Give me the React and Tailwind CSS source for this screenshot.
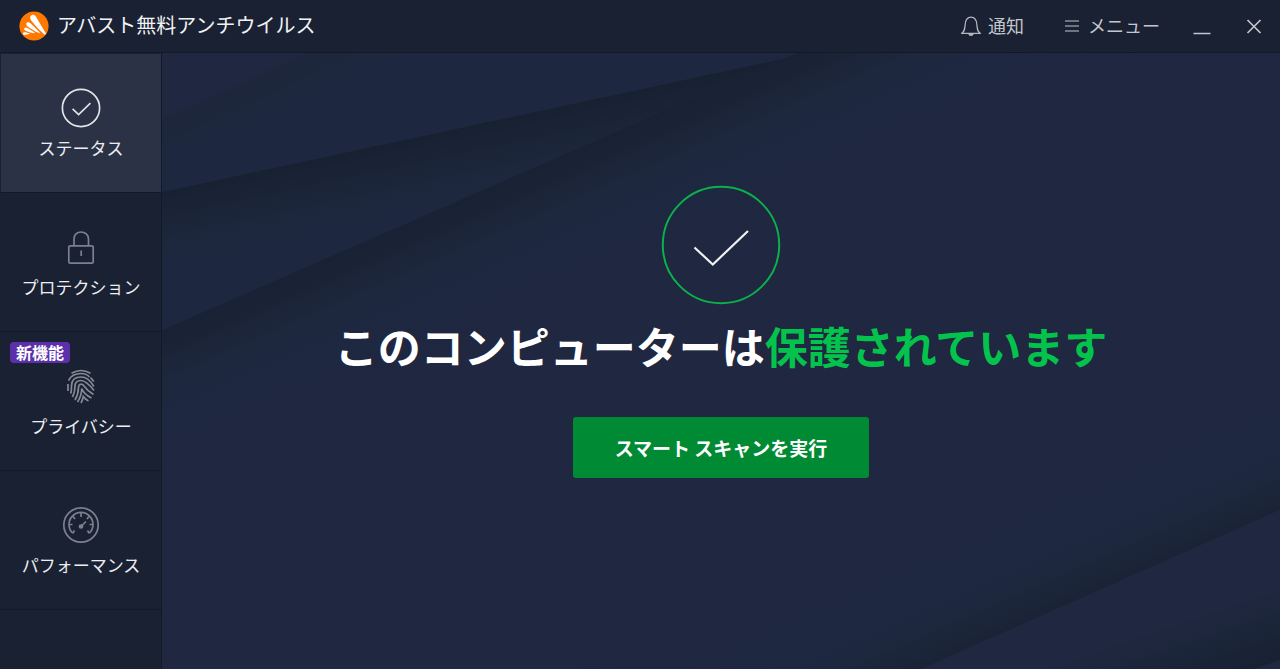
import React, { useState } from 'react';

function Logo() {
    return (
        <svg className="size-[30px]" viewBox="0 0 30 30" aria-hidden="true">
            <circle cx="15" cy="15" r="14.6" fill="#ff7800" />
            <g fill="#fff">
                <path d="M11.2 6.2C11.4 3.4 15 2.6 16.8 5.4L26.8 22.2C27.300 23.400 26.200 24 25.200 23.200C21 19.500 15.500 14 12.200 9.400C11.400 8.200 11.100 7.200 11.200 6.200Z" />
                <path d="M7.300 12.600C7.900 10.900 10 10.900 11.600 12.300L20.600 21.200C21.200 22 20.600 22.500 19.800 22.100C16 20.200 12 17.900 9 15.700C7.700 14.800 6.900 13.800 7.300 12.600Z" />
                <path d="M5.200 17.500C5.800 16.200 7.500 16.400 8.900 17.200L15.300 21.300C15.900 21.900 15.600 22.300 14.800 22.200C12 21.800 8.800 20.800 6.800 19.800C5.400 19.100 4.800 18.500 5.200 17.500Z" />
                <path d="M4 22.100C4.500 21.100 6 21.100 7.200 21.400L10.200 22.200C10.800 22.500 10.700 22.900 10.100 23.100C8.600 23.600 6.800 24 5.500 23.900C4.300 23.800 3.600 23 4 22.100Z" />
            </g>
        </svg>
    );
}

function StatusIcon() {
    return (
        <svg className="size-10" viewBox="0 0 40 40" fill="none" stroke="#e3e5e9" aria-hidden="true">
            <circle cx="20" cy="20" r="18.6" strokeWidth="1.7" />
            <path d="M11.6 20.8L17.6 26.6L29.4 15.2" strokeWidth="1.6" />
        </svg>
    );
}

function LockIcon() {
    return (
        <svg className="size-10" viewBox="0 0 40 40" fill="none" stroke="#7c818d" strokeWidth="1.7" aria-hidden="true">
            <rect x="7.8" y="18.8" width="24.4" height="17.4" rx="1.5" />
            <path d="M13 18.5V12C13 7.800 16 5 20 5S27.5 7.800 27.5 12V18.5M20.2 23.5V29" />
        </svg>
    );
}

function FingerprintIcon() {
    return (
        <svg className="size-10" viewBox="0 0 40 40" fill="none" stroke="#858a95" strokeWidth="1.7" aria-hidden="true">
            <path d="M10.5 7.200Q20 1.800 29.5 7.200" />
            <path d="M7.500 14.500Q11 7.500 20 7.500Q25.500 7.500 28.500 11" />
            <path d="M29.5 11.5L32.8 15.5" />
            <path d="M7 18V25" />
            <path d="M9.800 27.500Q10.500 24 10.500 20C10.500 14 14 11 20 11Q27.500 11 32.8 20.5" />
            <path d="M11.500 31Q14 26 14 20.500C14 16.500 16.500 14.500 20 14.500Q25 14.500 33 24.500" />
            <path d="M14 34Q17.500 28 17.500 21.500C17.500 17.300 21.500 17.300 23.500 20.500Q26.500 25 32.5 28.500" />
            <path d="M16.500 36Q20.500 30 20.800 22.500Q23 28.500 30.500 32" />
            <path d="M20 37Q21.700 34 22.300 30.500Q24.500 33.500 27.500 35" />
        </svg>
    );
}

function GaugeIcon() {
    return (
        <svg className="size-10" viewBox="0 0 40 40" fill="none" stroke="#7c818d" strokeWidth="1.7" aria-hidden="true">
            <circle cx="20" cy="20" r="17.2" />
            <path d="M11.8 28.2A12 12 0 1 1 28.2 28.2" />
            <path d="M20 8V12M12 11.500L14 14M28 11.500L26 14M8 19.500H11.500M32 19.500H28.500M11.800 28.200L13.500 25.500M28.200 28.200L26.500 25.500M20 21.500L25 16.500" />
            <circle cx="20" cy="21.5" r="1.5" fill="#7c818d" />
        </svg>
    );
}

function BellIcon() {
    return (
        <svg className="h-5 w-5" viewBox="0 0 20 20" fill="none" stroke="#b3b7bf" strokeWidth="1.2" aria-hidden="true">
            <path d="M.8 17.3C3.600 15.500 3.800 13 4.200 8.500C4.500 4 6.500 1.200 10 1.200S15.500 4 15.800 8.500C16.200 13 16.400 15.500 19.200 17.300Z" />
            <path d="M8 18H12L11.200 19.200H8.800Z" fill="#d9dbdf" />
        </svg>
    );
}

// Folded-paper shading behind the main panel
function Backdrop() {
    return (
        <svg
            className="absolute inset-0 h-full w-full"
            viewBox="0 0 1118 616"
            preserveAspectRatio="none"
            aria-hidden="true"
        >
            <defs>
                <linearGradient id="foldTop" gradientUnits="userSpaceOnUse" x1="0" y1="66" x2="17" y2="103">
                    <stop offset="0" stopColor="#1d263a" />
                    <stop offset="0.5" stopColor="#1d273c" />
                    <stop offset="1" stopColor="#1d2840" />
                </linearGradient>
                <linearGradient id="foldLong" gradientUnits="userSpaceOnUse" x1="0" y1="139" x2="19" y2="229">
                    <stop offset="0" stopColor="#182132" />
                    <stop offset="0.15" stopColor="#1a2335" />
                    <stop offset="0.45" stopColor="#1c263b" />
                    <stop offset="0.8" stopColor="#1d2840" />
                </linearGradient>
                <linearGradient id="foldMid" gradientUnits="userSpaceOnUse" x1="0" y1="277" x2="56" y2="405">
                    <stop offset="0" stopColor="#192234" />
                    <stop offset="0.15" stopColor="#1b2437" />
                    <stop offset="0.35" stopColor="#1d273d" />
                    <stop offset="0.5" stopColor="#1d2840" />
                    <stop offset="1" stopColor="#202740" />
                </linearGradient>
                <linearGradient id="foldLow" gradientUnits="userSpaceOnUse" x1="1118" y1="457" x2="1060" y2="326">
                    <stop offset="0" stopColor="#1a2336" />
                    <stop offset="0.15" stopColor="#1c263a" />
                    <stop offset="0.32" stopColor="#1d2840" />
                    <stop offset="1" stopColor="#202740" />
                </linearGradient>
                <linearGradient id="foldCorner" gradientUnits="userSpaceOnUse" x1="1118" y1="607" x2="1095" y2="540">
                    <stop offset="0" stopColor="#182132" />
                    <stop offset="0.6" stopColor="#1c263b" />
                    <stop offset="1" stopColor="#202740" />
                </linearGradient>
            </defs>
            <path d="M0 0H1118V616H0Z" fill="#202740" />
            <path d="M0 66L145 0H648L0 139Z" fill="url(#foldTop)" />
            <path d="M0 139L648 0L0 277Z" fill="url(#foldLong)" />
            <path d="M0 277L635 0H1118V400L700 616H0Z" fill="url(#foldMid)" />
            <path d="M1118 457L759 616H300L1118 258Z" fill="url(#foldLow)" />
            <path d="M1118 607L1092 616H880L1118 535Z" fill="url(#foldCorner)" />
        </svg>
    );
}

const tabs = [
    { id: 'status', label: 'ステータス', Icon: StatusIcon },
    { id: 'protection', label: 'プロテクション', Icon: LockIcon },
    { id: 'privacy', label: 'プライバシー', Icon: FingerprintIcon, badge: '新機能' },
    { id: 'performance', label: 'パフォーマンス', Icon: GaugeIcon }
];

function TopBar() {
    return (
        <header className="flex h-[53px] shrink-0 items-center justify-between border-b border-[#121a29] px-4">
            <div className="flex items-center gap-2 pl-[3px]">
                <Logo />
                <h1 className="pb-[3px] text-xl leading-6 text-[#f1f2f4]">アバスト無料アンチウイルス</h1>
            </div>
            <div className="flex items-center text-lg leading-6 text-[#c3c6cc]">
                <button type="button" className="flex items-center gap-[7px]">
                    <BellIcon />
                    <span className="pb-[2px]">通知</span>
                </button>
                <button type="button" className="ml-10 flex items-center gap-2">
                    <svg className="h-4 w-4" viewBox="0 0 16 16" stroke="#8b909b" strokeWidth="1.7" aria-hidden="true">
                        <path d="M1 3H15M1 8H15M1 13H15" />
                    </svg>
                    <span className="pb-[2px]">メニュー</span>
                </button>
                <button type="button" aria-label="最小化" className="ml-8">
                    <svg className="h-5 w-5" viewBox="0 0 20 20" stroke="#c3c6cc" strokeWidth="1.5" aria-hidden="true">
                        <path d="M1.500 17.500H18.500" />
                    </svg>
                </button>
                <button type="button" aria-label="閉じる" className="ml-8">
                    <svg className="h-5 w-5" viewBox="0 0 20 20" stroke="#c3c6cc" strokeWidth="1.7" aria-hidden="true">
                        <path d="M3.500 4L16.500 17M16.500 4L3.500 17" />
                    </svg>
                </button>
            </div>
        </header>
    );
}

function App() {
    const [active, setActive] = useState('status');

    return (
        <div className="flex min-h-screen flex-col bg-[#192133] font-['Noto_Sans_CJK_JP',sans-serif] text-white">
            <TopBar />
            <div className="flex flex-1">
                <nav className="w-[162px] shrink-0 border-r border-[#121a29] pt-px pl-px">
                    {tabs.map(({ id, label, Icon, badge }) => (
                        <button
                            key={id}
                            type="button"
                            onClick={() => setActive(id)}
                            className={`relative flex w-full flex-col items-center gap-2 border-b border-[#121a29] pt-[34px] pb-8 ${
                                active === id ? 'bg-[#2b3246]' : ''
                            }`}
                        >
                            {badge && (
                                <span className="absolute top-[10px] left-[9px] rounded bg-[#5c30ab] px-[6px] text-base leading-[21px] font-bold">
                                    {badge}
                                </span>
                            )}
                            <Icon />
                            <span className="text-[17px] leading-6 text-[#eceef1]">{label}</span>
                        </button>
                    ))}
                </nav>

                <main className="relative flex-1 overflow-hidden">
                    <Backdrop />
                    <div className="relative flex flex-col items-center pt-[132px]">
                        <svg className="size-[120px]" viewBox="0 0 120 120" fill="none" aria-hidden="true">
                            <circle cx="60" cy="60" r="58.2" stroke="#0bb04a" strokeWidth="2" />
                            <path d="M33.500 62.500L51.800 79.500L87 46" stroke="#f0f1f3" strokeWidth="2.2" />
                        </svg>
                        <h2 className="mt-2 text-[43px] leading-[64px] font-bold">
                            このコンピューターは<span className="text-[#04c34c]">保護されています</span>
                        </h2>
                        <button
                            type="button"
                            className="mt-10 rounded-[3px] bg-[#008a34] px-[42px] py-[18px] text-[19px] leading-[25px] font-bold"
                        >
                            スマート スキャンを実行
                        </button>
                    </div>
                </main>
            </div>
        </div>
    );
}

export default App;
